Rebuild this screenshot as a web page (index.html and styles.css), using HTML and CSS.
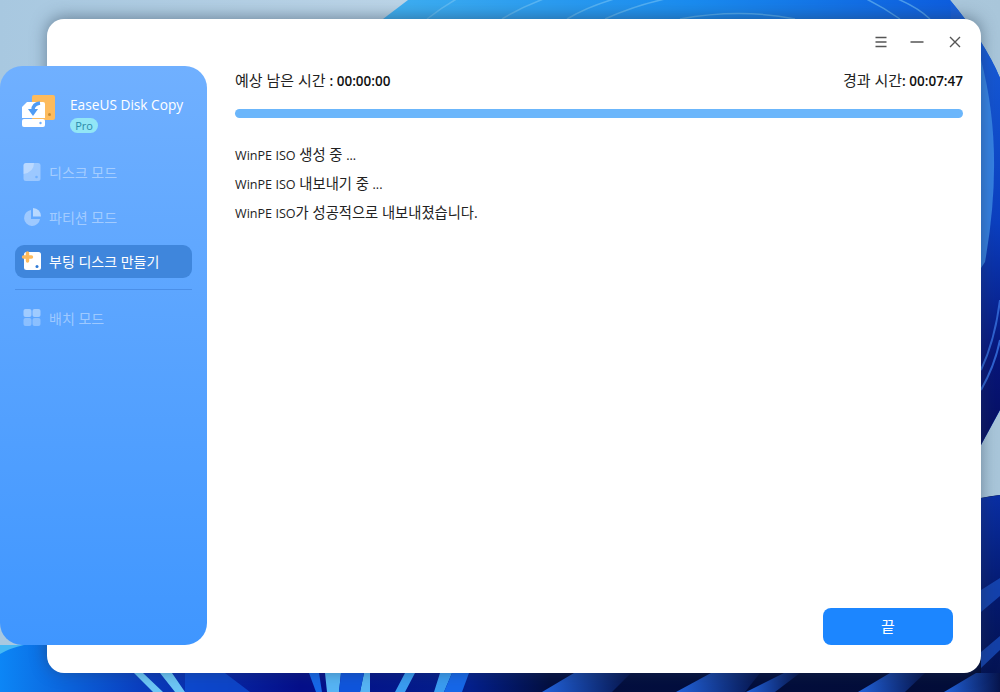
FILE: index.html
```html
<!DOCTYPE html>
<html lang="ko">

<head>
    <meta charset="UTF-8">
    <meta name="viewport" content="width=device-width, initial-scale=1.0">
    <title>EaseUS Disk Copy</title>
    <link rel="stylesheet" href="styles.css">
</head>

<body>
    <!-- desktop wallpaper -->
    <svg class="wallpaper" viewBox="0 0 1000 692" aria-hidden="true">
        <defs>
            <linearGradient id="sky" x1="0" y1="0" x2="1" y2="0">
                <stop offset="0" stop-color="#a8c8e0" />
                <stop offset="0.4" stop-color="#bcd5e8" />
                <stop offset="1" stop-color="#a9c6da" />
            </linearGradient>
            <linearGradient id="bloom" x1="0" y1="0" x2="1" y2="0">
                <stop offset="0" stop-color="#3fb0f2" />
                <stop offset="0.5" stop-color="#1a8cf0" />
                <stop offset="1" stop-color="#0b55dc" />
            </linearGradient>
            <linearGradient id="rightband" x1="0" y1="0" x2="0" y2="1">
                <stop offset="0" stop-color="#1a62dc" />
                <stop offset="0.5" stop-color="#0b3fc0" />
                <stop offset="0.8" stop-color="#08167a" />
                <stop offset="1" stop-color="#060f60" />
            </linearGradient>
            <linearGradient id="floor" x1="0" y1="0" x2="1" y2="0">
                <stop offset="0" stop-color="#0c86f6" />
                <stop offset="0.14" stop-color="#0a3fc0" />
                <stop offset="0.3" stop-color="#050f8a" />
                <stop offset="0.47" stop-color="#04208c" />
                <stop offset="0.55" stop-color="#030f40" />
                <stop offset="1" stop-color="#030d38" />
            </linearGradient>
            <linearGradient id="stripe" x1="0" y1="0" x2="1" y2="0">
                <stop offset="0" stop-color="#2263dc" />
                <stop offset="1" stop-color="#06144c" />
            </linearGradient>
            <linearGradient id="lowright" x1="0" y1="0" x2="0" y2="1">
                <stop offset="0" stop-color="#0a2fa4" />
                <stop offset="0.5" stop-color="#051a70" />
                <stop offset="1" stop-color="#04124c" />
            </linearGradient>
        </defs>
        <rect width="1000" height="692" fill="url(#sky)" />
        <path d="M408 0 L950 0 Q985 42 1000 78 L1000 410 L981 445 L500 300 L383 19 Z" fill="url(#bloom)" />
        <path d="M950 0 Q985 42 1000 78 L1000 410 L981 445 L960 200 Z" fill="url(#rightband)" />
        <path d="M981 60 Q1005 150 985 262 L981 268 Z" fill="#3f8fe8" opacity="0.8" />
        <path d="M981 370 Q995 340 1000 300 M981 390 Q995 365 1000 340" stroke="#2f62d0" stroke-width="2" fill="none" />
        <path d="M427 19 Q445 5 462 -4 M502 19 Q525 5 552 -4 M567 19 Q590 5 625 -4 M605 19 Q640 3 680 -4 M680 19 Q740 8 795 19 M900 19 Q880 5 860 -4 M930 19 Q915 5 890 -4"
            stroke="#7cc8f6" stroke-opacity="0.55" stroke-width="1.5" fill="none" />
        <path d="M0 645 L120 645 L800 600 L981 498 Q990 496 1000 495 L1000 692 L0 692 Z" fill="url(#floor)" />
        <path d="M981 498 L1000 495 L1000 692 L981 692 Z" fill="url(#lowright)" />
        <path d="M981 590 L1000 578 L1000 596 L981 612 Z M981 652 L1000 636 L1000 650 L981 668 Z" fill="#1a4fc0" opacity="0.75" />
        <path d="M0 645 L24 645 Q10 648 0 654 Z" fill="#45b8f4" />
        <path d="M134 673 L143 673 L163 692 L153 692 Z M160 673 L172 673 L185 692 L175 692 Z" fill="#6cc6f5" />
        <path d="M185 673 L225 673 L250 692 L185 692 Z" fill="#1052d8" opacity="0.7" />
        <path d="M309 673 L319 673 L322 692 L316 692 Z" fill="#1667e8" />
        <path d="M325 673 L341 673 L339 692 L327 692 Z M364 673 L370 673 L370 692 L360 692 Z" fill="#56b4f4" />
        <path d="M341 673 L364 673 L360 692 L339 692 Z" fill="#0f55dc" />
        <path d="M405 673 L415 673 L405 692 L395 692 Z M440 673 L452 673 L444 692 L434 692 Z" fill="#3a9cf0" />
        <path d="M452 673 L469 673 L462 692 L444 692 Z" fill="#1667e8" />
        <path d="M574 673 L631 673 L612 692 L542 692 Z" fill="url(#stripe)" />
        <path d="M711 673 L760 673 L745 692 L676 692 Z" fill="url(#stripe)" />
        <path d="M784 673 L800 673 L775 692 L746 692 Z" fill="url(#stripe)" />
        <path d="M890 673 L925 673 L905 692 L858 692 Z" fill="url(#stripe)" />
        <path d="M976 673 L1000 673 L1000 692 L944 692 Z" fill="url(#stripe)" />
    </svg>

    <div class="window">
        <aside class="sidebar">
            <div class="brand">
                <svg class="logo" viewBox="0 0 34 33">
                    <rect x="11" y="0" width="23" height="25" rx="2" fill="#fdbb5c" />
                    <circle cx="28.500" cy="19.500" r="1.500" fill="#c98a30" />
                    <path d="M6 7 H22 a2 2 0 0 1 2 2 V23 H1 V12 Z" fill="#fff" />
                    <rect x="1" y="24" width="23" height="8" rx="2" fill="#fff" />
                    <circle cx="19.500" cy="28" r="1.200" fill="#6fb0ff" />
                    <path d="M19 8 Q12 9 12 15" stroke="#4f9cf5" stroke-width="3.400" fill="none" />
                    <path d="M7 14 L17 14 L12 21 Z" fill="#4f9cf5" />
                </svg>
                <div class="brand-text">
                    <div class="brand-name">EaseUS Disk Copy</div>
                    <span class="badge">Pro</span>
                </div>
            </div>

            <nav class="nav">
                <a class="nav-item">
                    <svg class="nav-icon" viewBox="0 0 18 18">
                        <rect x="0.500" width="17" height="18" rx="2.500" fill="#fff" fill-opacity="0.35" />
                        <path d="M0.500 11 V2.500 A2.500 2.500 0 0 1 3 0 H11 Q11 9 0.500 11 Z" fill="#fff" fill-opacity="0.3" />
                        <circle cx="13.500" cy="14" r="1.300" fill="#6fb0ff" />
                    </svg>
                    디스크 모드
                </a>
                <a class="nav-item">
                    <svg class="nav-icon" viewBox="0 0 18 18">
                        <path d="M8 2 A8 8 0 1 0 17 11 H8 Z" fill="#fff" fill-opacity="0.38" />
                        <path d="M10 0 A8 8 0 0 1 18 8.500 H10 Z" fill="#fff" fill-opacity="0.55" />
                    </svg>
                    파티션 모드
                </a>
                <a class="nav-item active">
                    <svg class="nav-icon" viewBox="0 0 18 18">
                        <rect x="1" width="17" height="18" rx="2.500" fill="#fff" />
                        <circle cx="14" cy="14.500" r="1.500" fill="#2f7ad6" />
                        <path d="M4.500 1 V9 M0.500 5 H8.500" stroke="#fdbb5c" stroke-width="3.400" stroke-linecap="round" />
                    </svg>
                    부팅 디스크 만들기
                </a>
                <div class="nav-divider"></div>
                <a class="nav-item batch">
                    <svg class="nav-icon" viewBox="0 0 18 18">
                        <rect x="0.500" width="8" height="8" rx="2" fill="#fff" fill-opacity="0.42" />
                        <rect x="9.500" width="8" height="8" rx="2" fill="#fff" fill-opacity="0.42" />
                        <rect x="0.500" y="9" width="8" height="8" rx="2" fill="#fff" fill-opacity="0.3" />
                        <rect x="9.500" y="9" width="8" height="8" rx="2" fill="#fff" fill-opacity="0.3" />
                    </svg>
                    배치 모드
                </a>
            </nav>
        </aside>

        <main class="main">
            <div class="titlebar">
                <svg class="tb-icon menu" viewBox="0 0 14 14">
                    <path d="M1.500 2.500 H12.500 M1.500 7 H12.500 M1.500 11.500 H12.500" stroke="#555" stroke-width="1.500" />
                </svg>
                <svg class="tb-icon" viewBox="0 0 14 14">
                    <path d="M0.500 7 H13.500" stroke="#555" stroke-width="1.500" />
                </svg>
                <svg class="tb-icon" viewBox="0 0 14 14">
                    <path d="M2 2 L12 12 M12 2 L2 12" stroke="#555" stroke-width="1.400" />
                </svg>
            </div>

            <div class="times">
                <span>예상 남은 시간 <b>: 00:00:00</b></span>
                <span>경과 시간<b>: 00:07:47</b></span>
            </div>

            <div class="progress"></div>

            <div class="log">
                <p><span class="en">WinPE ISO</span> 생성 중 <span class="en">...</span></p>
                <p><span class="en">WinPE ISO</span> 내보내기 중 <span class="en">...</span></p>
                <p><span class="en">WinPE ISO</span>가 성공적으로 내보내졌습니다.</p>
            </div>

            <div class="actions">
                <button class="btn">끝</button>
            </div>
        </main>
    </div>
</body>

</html>
```

FILE: styles.css
```css
html,
body {
    margin: 0;
    height: 692px;
    overflow: hidden;
}

body {
    position: relative;
    font-family: "Open Sans", "Noto Sans CJK KR", sans-serif;
    font-size: 14px;
    color: #222;
}

.wallpaper {
    position: absolute;
    left: 0;
    top: 0;
    width: 1000px;
    height: 692px;
}

.window {
    position: relative;
    display: flex;
    height: 654px;
    margin: 19px 19px 0 47px;
    background: #fff;
    border-radius: 17px;
    box-shadow: 0 -2px 16px rgba(40, 60, 80, 0.5);
}

/* sidebar hangs out over the left edge of the window */
.sidebar {
    flex: none;
    width: 207px;
    height: 579px;
    margin: 47px 0 0 -47px;
    background: linear-gradient(180deg, #70b0ff 0%, #3f96ff 100%);
    border-radius: 22px;
}

.brand {
    display: flex;
    gap: 15px;
    padding: 29px 0 0 21px;
}

.logo {
    width: 34px;
    height: 33px;
}

.brand-text {
    color: #fff;
}

.brand-name {
    font-size: 13.700px;
    font-weight: 500;
    line-height: 20px;
}

.badge {
    display: block;
    width: 28px;
    height: 15px;
    margin-top: 3px;
    background: #92e6f6;
    border-radius: 8px;
    color: #2b8aa8;
    font-size: 11px;
    font-weight: 500;
    line-height: 15px;
    text-align: center;
}

.nav {
    padding: 22.500px 15px 0;
}

.nav-item {
    display: flex;
    align-items: center;
    gap: 8px;
    height: 33px;
    margin-bottom: 11.500px;
    padding-left: 8px;
    border-radius: 9px;
    color: rgba(255, 255, 255, 0.42);
    font-size: 14px;
}

.nav-item.active {
    background: #3f86dc;
    color: #fff;
}

.nav-item.batch {
    margin-top: 11px;
}

.nav-icon {
    flex: none;
    width: 18px;
    height: 18px;
    overflow: visible;
}

.nav-divider {
    height: 1px;
    background: rgba(40, 100, 190, 0.35);
}

.main {
    flex: 1;
    display: flex;
    flex-direction: column;
    padding: 0 18px 0 28px;
}

.titlebar {
    display: flex;
    justify-content: flex-end;
    gap: 24px;
    padding: 16px 1px 0 0;
}

.tb-icon {
    width: 14px;
    height: 14px;
}

.tb-icon.menu {
    margin-right: -2px;
}

.times {
    display: flex;
    justify-content: space-between;
    margin-top: 21px;
    font-size: 15px;
    line-height: 20px;
}

.times b {
    font-size: 13.500px;
    font-weight: 600;
    color: #111;
}

.progress {
    height: 9px;
    margin-top: 18px;
    background: #6bb6fb;
    border-radius: 5px;
}

.log {
    margin-top: 27px;
    font-size: 14.300px;
}

.log p {
    margin: 0 0 8px;
    line-height: 20px;
}

.en {
    font-size: 12.600px;
}

.actions {
    display: flex;
    justify-content: flex-end;
    margin-top: auto;
    padding: 0 10px 28px 0;
}

.btn {
    width: 130px;
    height: 37px;
    padding: 0 0 3px;
    border: 0;
    border-radius: 8px;
    background: #1c86ff;
    color: #fff;
    font: inherit;
    font-size: 15px;
}
```
